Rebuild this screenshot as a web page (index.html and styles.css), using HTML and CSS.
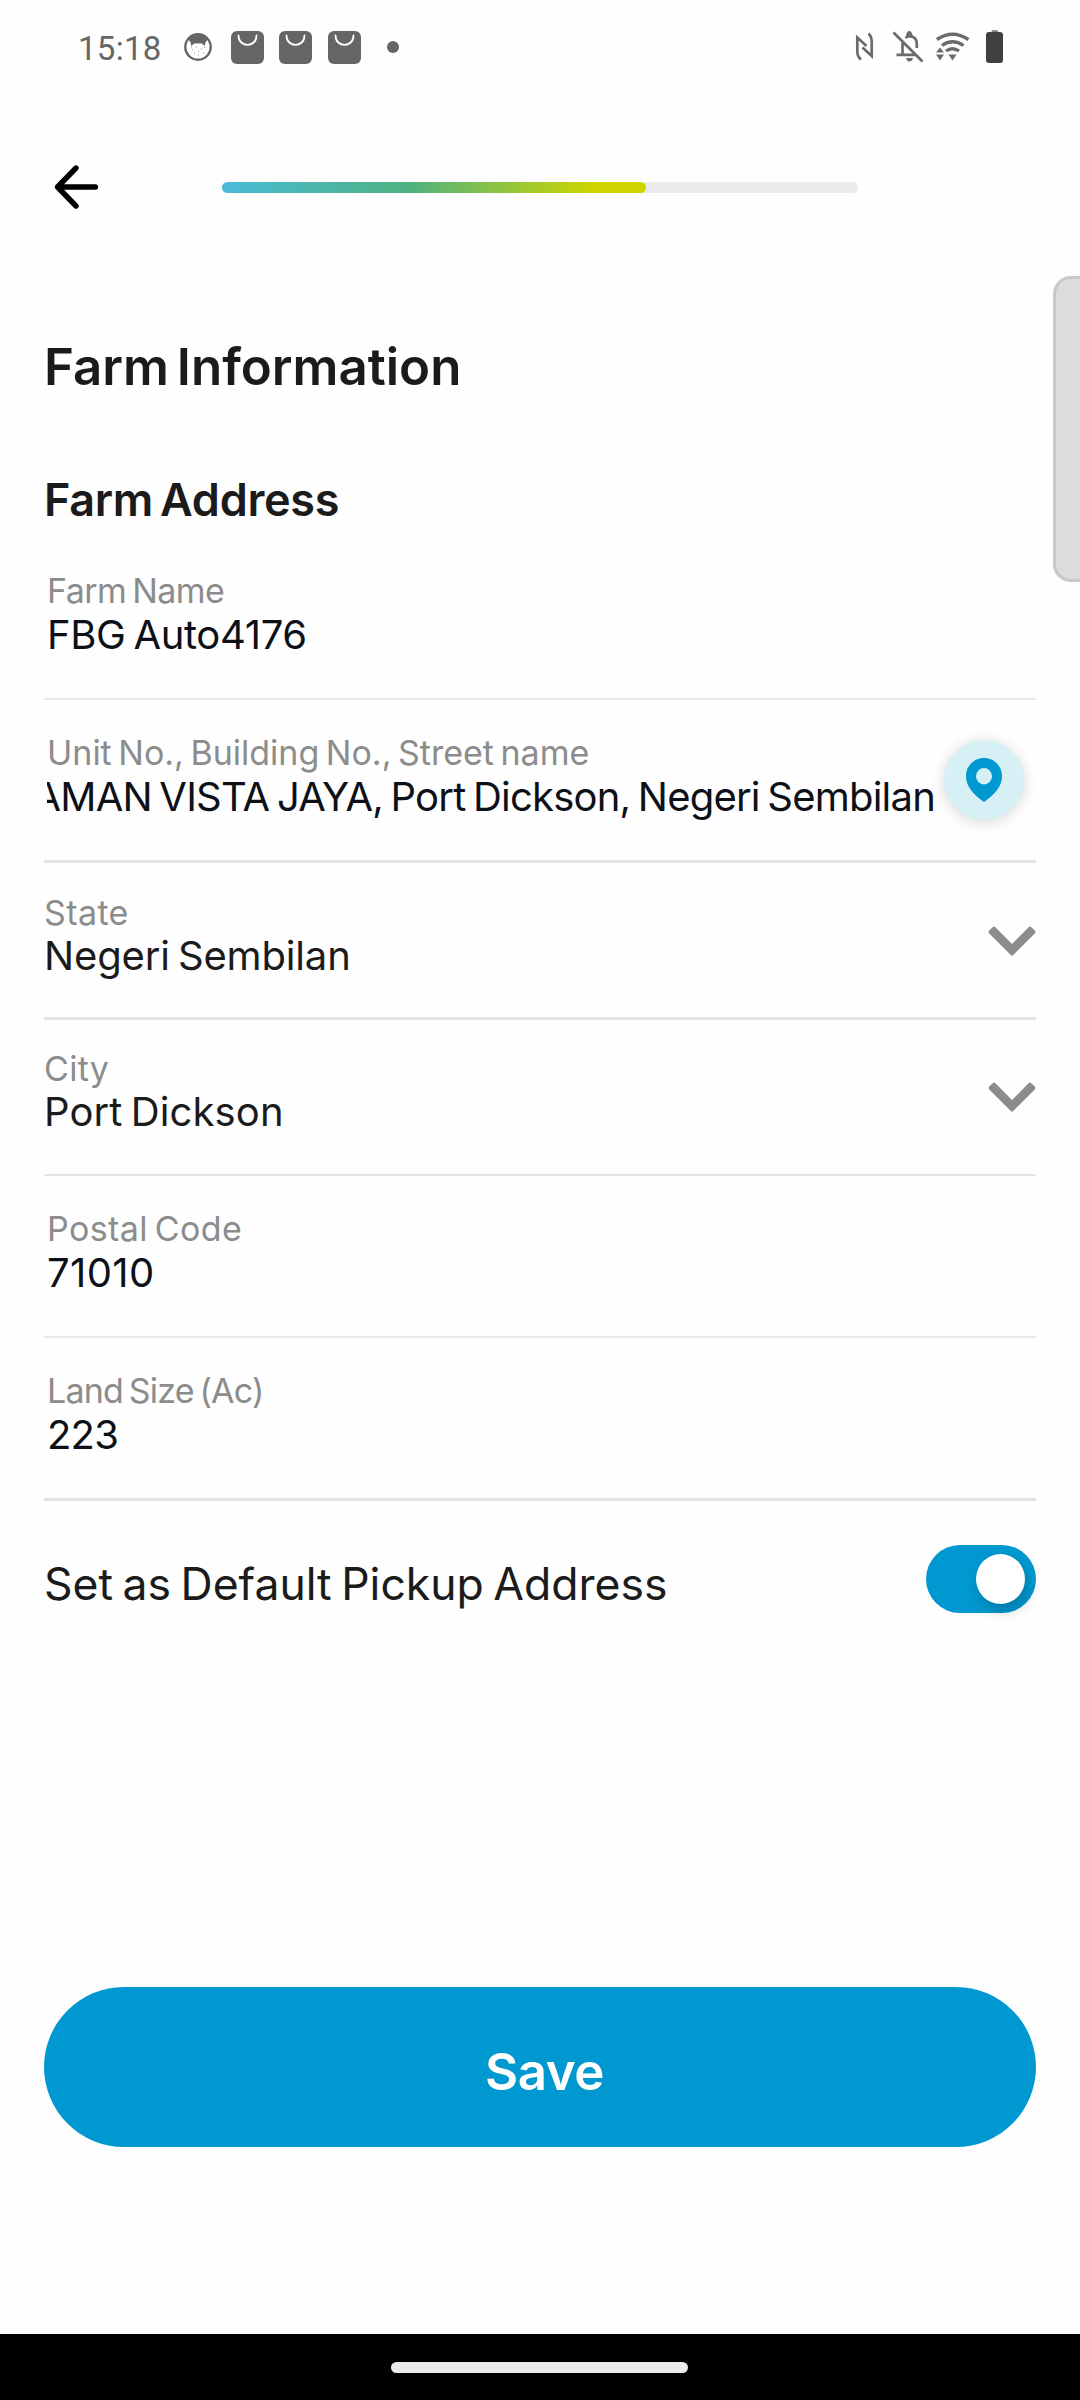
FILE: index.html
```html
<!DOCTYPE html>
<html lang="en">
<head>
<meta charset="utf-8">
<title>Farm Information</title>
<link rel="stylesheet" href="styles.css">
</head>
<body>
<div class="screen">
  <header class="status">
    <span class="clock">15:18</span>
    <svg class="face" width="28" height="28" viewBox="0 0 28 28"><circle cx="14" cy="14" r="12.7" fill="#fff" stroke="#666" stroke-width="2.4"/><path d="M4 6Q14-3 24 6L21.500 9.500 20.500 13 18 10.500H10L7.500 13 6.500 9.500Z" fill="#666"/><path d="M8 17h1M12 14h1M17 16h1M10 20h1M14 18.500h1M19 20h1M14 22h1M20 14.500h1M7 14h1" stroke="#999" stroke-width="1"/></svg>
    <svg class="bag" width="33" height="33" viewBox="0 0 33 33"><rect width="33" height="33" rx="6" fill="#666"/><path d="M7.500 4.500C7.500 17 25.500 17 25.500 4.500" fill="none" stroke="#fff" stroke-width="1.800" stroke-linecap="round"/></svg>
    <svg class="bag" width="33" height="33" viewBox="0 0 33 33"><rect width="33" height="33" rx="6" fill="#666"/><path d="M7.500 4.500C7.500 17 25.500 17 25.500 4.500" fill="none" stroke="#fff" stroke-width="1.800" stroke-linecap="round"/></svg>
    <svg class="bag last" width="33" height="33" viewBox="0 0 33 33"><rect width="33" height="33" rx="6" fill="#666"/><path d="M7.500 4.500C7.500 17 25.500 17 25.500 4.500" fill="none" stroke="#fff" stroke-width="1.800" stroke-linecap="round"/></svg>
    <span class="dot"></span>
    <svg class="signals" width="150" height="34" viewBox="855 30 150 34">
      <g fill="none" stroke="#6b6b6b" stroke-width="2.700">
        <path d="M861 59.500Q857.300 56.500 857.300 51.500V37.500L866.500 46M868.500 33.500Q871.700 36.500 871.700 42V56L862.500 47.500"/>
        <path d="M902.500 54V44.500Q902.500 42 903.500 40.500M905.500 38Q907.500 36.200 909.500 36.200 916.800 36.600 916.800 44V48M896.500 54.800H915M893.500 32.500L922.500 61.500"/>
        <path d="M936.800 39.500Q952.500 29 968.500 39.500" stroke-width="3.500"/>
        <path d="M942 45.500Q952.500 38 963.500 45.500" stroke-width="3.300"/>
        <path d="M946 51Q952.500 46.500 959 51" stroke-width="3.300"/>
      </g>
      <g fill="#6b6b6b"><path d="M906 36.500Q906.500 31 909.300 31T912.600 36.500ZM906 58h7q-1 3.500-3.500 3.500T906 58ZM936 52.500h8L940 47.500ZM936 54.500h8L940 60.500ZM948.500 54.500h8L952.500 60.500Z"/></g>
      <path d="M991.500 32.300V31.500Q991.500 30 993 30h3.500Q998 30 998 31.500v.8Z" fill="#888"/><rect x="986" y="32" width="17" height="31" rx="3" fill="#404040"/>
    </svg>
  </header>

  <nav class="topbar">
    <svg class="back" width="46" height="46" viewBox="0 0 46 46"><path d="M23 4L4.500 23 23 42M4.500 23H42.500" fill="none" stroke="#000" stroke-width="5.400" stroke-linecap="round" stroke-linejoin="round"/></svg>
    <div class="track"><div class="fill"></div></div>
  </nav>

  <main class="content">
    <h1>Farm Information</h1>
    <h2>Farm Address</h2>
    <section class="form">
      <div class="field name">
        <div class="label">Farm Name</div>
        <div class="value">FBG Auto4176</div>
      </div>
      <div class="field street">
        <div class="text">
          <div class="label">Unit No., Building No., Street name</div>
          <div class="value scrolled"><span>AMAN VISTA JAYA, Port Dickson, Negeri Sembilan</span></div>
        </div>
        <div class="locate"><svg width="36" height="44" viewBox="0 0 36 44"><path fill-rule="evenodd" d="M18 0C8 0 0 8 0 18 0 29 8 37 18 44 28 37 36 29 36 18 36 8 28 0 18 0ZM18 10A8 8.200 0 1 1 18 26.400 8 8.200 0 1 1 18 10Z" fill="#0098d0"/></svg></div>
      </div>
      <div class="field select state">
        <div class="text">
          <div class="label">State</div>
          <div class="value">Negeri Sembilan</div>
        </div>
        <svg class="chevron" width="48" height="30" viewBox="0 0 48 30"><path d="M5.200 0.700Q6.200 0 7.200 1L24 18 40.800 1Q41.800 0 42.800 0.700L47 4.700Q48 6 47 7.300L25.200 29Q24 30 22.800 29L1 7.300Q0 6 1 4.700Z" fill="#8c8c8c"/></svg>
      </div>
      <div class="field select city">
        <div class="text">
          <div class="label">City</div>
          <div class="value">Port Dickson</div>
        </div>
        <svg class="chevron" width="48" height="30" viewBox="0 0 48 30"><path d="M5.200 0.700Q6.200 0 7.200 1L24 18 40.800 1Q41.800 0 42.800 0.700L47 4.700Q48 6 47 7.300L25.200 29Q24 30 22.800 29L1 7.300Q0 6 1 4.700Z" fill="#8c8c8c"/></svg>
      </div>
      <div class="field postal">
        <div class="label">Postal Code</div>
        <div class="value">71010</div>
      </div>
      <div class="field land">
        <div class="label">Land Size (Ac)</div>
        <div class="value">223</div>
      </div>
    </section>
    <div class="pickup">
      <span class="pickup-label">Set as Default Pickup Address</span>
      <span class="toggle"><span class="knob"></span></span>
    </div>
    <button class="save">Save</button>
  </main>

  <footer class="navbar"><span class="pill"></span></footer>
  <div class="edge-panel"></div>
</div>
</body>
</html>
```

FILE: styles.css
```css
* { box-sizing: border-box; }
body { margin: 0; background: #fefefe; }
.screen {
  position: relative;
  width: 1080px;
  height: 2400px;
  overflow: hidden;
  display: flex;
  flex-direction: column;
  background: #fefefe;
  color: #1b1b1b;
  font-family: Inter, "Open Sans", sans-serif;
  white-space: nowrap;
}
.screen svg { display: block; flex: none; }

/* system status bar */
.status { display: flex; align-items: center; height: 94px; padding-left: 78px; flex: none; }
.clock { width: 106px; font: 400 33px/40px Roboto, sans-serif; letter-spacing: 0.3px; color: #666; padding-top: 3px; }
.bag { margin-left: 15px; }
.bag.last { margin-left: 16px; }
.face + .bag { margin-left: 19px; }
.dot { width: 12px; height: 12px; margin-left: 26px; border-radius: 50%; background: #666; }
.signals { margin-left: 456px; }

.topbar { display: flex; align-items: center; height: 187px; padding: 0 0 1px 53px; flex: none; }
.track { width: 636px; height: 11px; margin-left: 123px; border-radius: 6px; background: #ebebeb; }
.fill {
  width: 424px;
  height: 11px;
  border-radius: 6px;
  background: linear-gradient(90deg, #4abbd4 2%, #4eb280 44%, #d0d500 88%);
}

.content { flex: 1; display: flex; flex-direction: column; padding: 56px 44px 0; }
h1, h2 { margin: 0; font-weight: 600; }
h1 { font-size: 51px; line-height: 60px; word-spacing: -5px; }
h2 { margin-top: 76px; font-size: 45px; line-height: 54px; letter-spacing: -0.3px; word-spacing: -4px; }

.form { display: flex; flex-direction: column; margin-top: 20px; }
.field { border-bottom: 2px solid #e3e3e3; padding-left: 3px; word-spacing: -3px; }
.label { font-size: 34px; line-height: 46px; color: #8c8c8c; }
.value { font-size: 40px; line-height: 42px; color: #0d1117; }
.name { height: 153px; padding-top: 21px; border-color: #e8e8e8; }
.name .label { letter-spacing: -0.55px; }
.name .value { letter-spacing: -0.35px; }
.street { display: flex; height: 163px; padding-top: 30px; border-bottom-width: 3px; }
.street .text { width: 888px; }
.scrolled { display: flex; justify-content: flex-end; overflow-x: clip; letter-spacing: -0.78px; }
.locate {
  display: flex;
  align-items: center;
  justify-content: center;
  width: 80px;
  height: 80px;
  margin: 10px 0 0 9px;
  border-radius: 50%;
  background: #d6f0f6;
  box-shadow: 0 2px 14px rgba(0, 0, 0, 0.16);
}
.select { display: flex; justify-content: space-between; padding-left: 0; }
.select .value { line-height: 40px; color: #1b1b1b; }
.chevron { margin-top: 36px; }
.state { height: 157px; padding-top: 27px; border-bottom-width: 3px; }
.state .label { letter-spacing: 0.4px; }
.state .value { letter-spacing: -0.15px; }
.city { height: 156px; padding-top: 26px; letter-spacing: 0.1px; }
.city .label { letter-spacing: 0.3px; }
.postal { height: 162px; padding-top: 30px; border-color: #e8e8e8; letter-spacing: 0.4px; }
.land { height: 163px; padding-top: 30px; border-bottom-width: 3px; letter-spacing: -0.8px; }

.pickup { display: flex; justify-content: space-between; align-items: center; height: 68px; margin-top: 44px; }
.pickup-label { padding-top: 10px; font-size: 44.500px; line-height: 54px; word-spacing: -3px; }
.toggle { display: flex; align-items: center; justify-content: flex-end; width: 110px; height: 68px; padding-right: 11px; border-radius: 34px; background: #0098d0; }
.knob { width: 49px; height: 50px; border-radius: 50%; background: #fff; box-shadow: 3px 7px 14px rgba(0, 0, 0, 0.2); }

.save {
  height: 160px;
  margin-top: 374px;
  padding: 10px 0 0 9px;
  border: 0;
  border-radius: 80px;
  background: #0098d0;
  color: #fff;
  font: 600 51px/60px Inter, "Open Sans", sans-serif;
  letter-spacing: -0.5px;
}

.navbar { display: flex; align-items: center; justify-content: center; height: 66px; padding: 0 2px 0 0; flex: none; background: #000; }
.pill { width: 297px; height: 11px; border-radius: 6px; background: #ebebeb; }

/* system edge handle, floating over the page */
.edge-panel {
  position: absolute;
  top: 276px;
  right: 0;
  width: 27px;
  height: 306px;
  border: 3px solid #c8c8c8;
  border-right: 0;
  border-radius: 18px 0 0 18px;
  background: #dcdcdc;
}
```
